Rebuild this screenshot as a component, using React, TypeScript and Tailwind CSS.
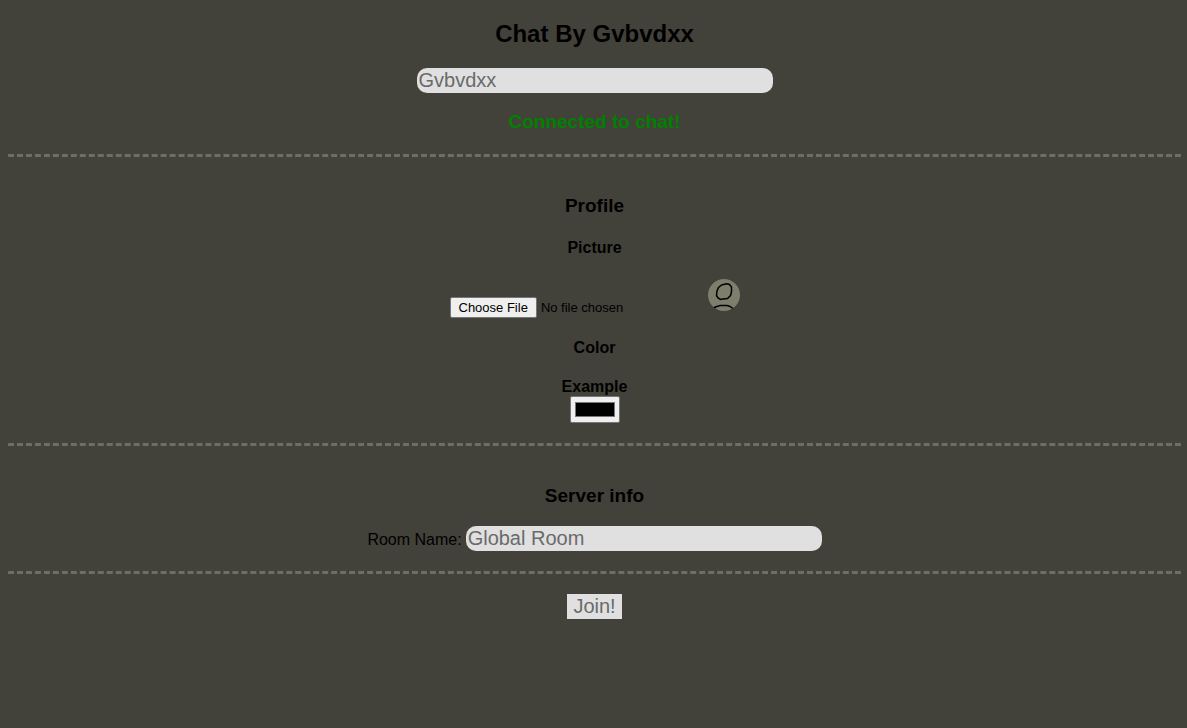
function Divider() {
  return <hr className="my-5 w-full border-0 border-t-3 border-dashed border-[#6e6e62]" />;
}

function Avatar() {
  return (
    <svg className="mb-[7px]" width="32" height="32" viewBox="0 0 32 32" role="img" aria-label="Profile picture">
      <circle cx="16" cy="16" r="16" fill="#7d7f6c" />
      <path
        d="M13.500 6 L10.500 8.500 L9 12 L8.500 16.500 L10 19 L12.500 20.500 L15 20 L19.500 19.500 L22.500 16.500 L23.500 13 L23.500 8 L21.500 5.500 L18.500 4.800 L15.500 5.500 L13.500 6"
        fill="none"
        stroke="#000"
        strokeWidth="1.5"
      />
      <path
        d="M6 28.500 L9 27.500 L12 26.500 L19 26.500 L22 27.500 L25 29.500"
        fill="none"
        stroke="#000"
        strokeWidth="1.4"
      />
    </svg>
  );
}

const fieldClass =
  "h-[25px] w-[356px] max-w-full rounded-[10px] bg-[#e0e0e0] px-0.5 text-[20px] leading-[23px] text-black outline-none placeholder:text-[#6a6a6a]";

export default function App() {
  return (
    <main className="flex min-h-screen flex-col items-center bg-[#43423a] pt-5 pr-1.5 pl-2 font-['Liberation_Sans',Arial,sans-serif] text-[16px] leading-[18px] text-black">
      <h2 className="text-[24px] leading-7 font-bold">Chat By Gvbvdxx</h2>
      <input type="text" aria-label="Username" placeholder="Gvbvdxx" className={`${fieldClass} mt-5`} />
      <h3 className="mt-[18px] mb-px text-[19px] leading-[22px] font-bold text-[#008000]">Connected to chat!</h3>
      <Divider />

      <h3 className="mt-[18px] text-[19px] leading-[22px] font-bold">Profile</h3>
      <h4 className="mt-[22px] font-bold">Picture</h4>
      <div className="mt-[22px] flex items-end gap-1">
        <input
          type="file"
          aria-label="Choose profile picture"
          className="h-[21px] w-[254px] text-[13px] leading-[17px] file:mr-1 file:h-[21px] file:rounded-[2px] file:border file:border-solid file:border-[#767676] file:bg-[#efefef] file:px-2 file:py-px file:text-black"
        />
        <Avatar />
      </div>
      <h4 className="mt-[21px] font-bold">Color</h4>
      <label htmlFor="name-color" className="mt-[21px] font-bold">
        Example
      </label>
      <input
        id="name-color"
        type="color"
        defaultValue="#000000"
        className="h-[27px] w-[50px] rounded-[2px] border border-[#767676] bg-[#efefef] px-0.5 py-px"
      />
      <Divider />

      <h3 className="mt-[19px] text-[19px] leading-[22px] font-bold">Server info</h3>
      <div className="mt-[19px] flex items-baseline gap-1">
        <label htmlFor="room-name">Room Name:</label>
        <input id="room-name" type="text" placeholder="Global Room" className={fieldClass} />
      </div>
      <Divider />
      <button type="button" className="h-[25px] bg-[#e0e0e0] px-1.5 text-[20px] leading-[23px] text-[#6a6a6a]">
        Join!
      </button>
    </main>
  );
}
